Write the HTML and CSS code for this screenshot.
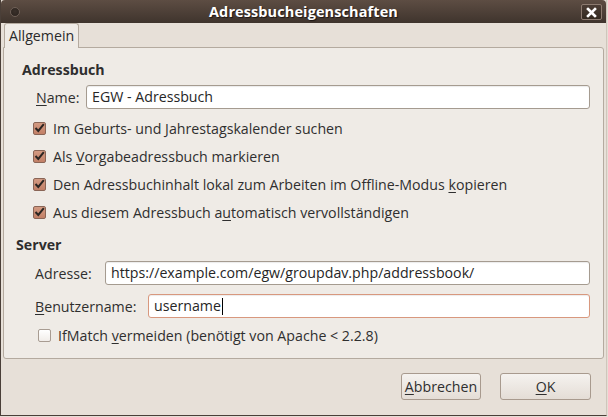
FILE: index.html
```html
<!DOCTYPE html>
<html>
<head>
<meta charset="utf-8">
<link rel="stylesheet" href="styles.css">
</head>
<body>
<div class="window">
  <div class="titlebar">
    <span class="wm-dot"></span>
    <span class="title">Adressbucheigenschaften</span>
    <span class="close-btn">
      <svg width="11" height="11" viewBox="0 0 11 11"><path d="M2 2 L9 9 M9 2 L2 9" stroke="#fff" stroke-width="2.6" stroke-linecap="square"/></svg>
    </span>
  </div>
  <div class="tabs">
    <div class="tab">Allgemein</div>
  </div>
  <div class="panel">
    <div class="heading h-addr">Adressbuch</div>
    <div class="row name-row">
      <span class="label"><u>N</u>ame:</span>
      <div class="input">EGW - Adressbuch</div>
    </div>
    <div class="checks">
      <div class="check"><span class="box on"><svg width="11" height="10" viewBox="0 0 11 10"><path d="M1.5 5 L4.3 8 L9.8 1.2" fill="none" stroke="#2b2522" stroke-width="2"/></svg></span><span>Im Geburts- und Jahrestagskalender suchen</span></div>
      <div class="check"><span class="box on"><svg width="11" height="10" viewBox="0 0 11 10"><path d="M1.5 5 L4.3 8 L9.8 1.2" fill="none" stroke="#2b2522" stroke-width="2"/></svg></span><span>Als <u>V</u>orgabeadressbuch markieren</span></div>
      <div class="check"><span class="box on"><svg width="11" height="10" viewBox="0 0 11 10"><path d="M1.5 5 L4.3 8 L9.8 1.2" fill="none" stroke="#2b2522" stroke-width="2"/></svg></span><span>Den Adressbuchinhalt lokal zum Arbeiten im Offline-Modus <u>k</u>opieren</span></div>
      <div class="check"><span class="box on"><svg width="11" height="10" viewBox="0 0 11 10"><path d="M1.5 5 L4.3 8 L9.8 1.2" fill="none" stroke="#2b2522" stroke-width="2"/></svg></span><span>Aus diesem Adressbuch a<u>u</u>tomatisch vervollständigen</span></div>
    </div>
    <div class="heading h-server">Server</div>
    <div class="row addr-row">
      <span class="label">Adresse:</span>
      <div class="input">https://example.com/egw/groupdav.php/addressbook/</div>
    </div>
    <div class="row user-row">
      <span class="label"><u>B</u>enutzername:</span>
      <div class="input focus">username<span class="caret"></span></div>
    </div>
    <div class="check ifmatch"><span class="box"></span><span>IfMatch <u>v</u>ermeiden (benötigt von Apache &lt; 2.2.8)</span></div>
  </div>
  <div class="buttons">
    <div class="btn btn-cancel"><u>A</u>bbrechen</div>
    <div class="btn btn-ok"><u>O</u>K</div>
  </div>
</div>
</body>
</html>
```

FILE: styles.css
```css
html, body {
  margin: 0;
  padding: 0;
  width: 608px;
  height: 417px;
  overflow: hidden;
  background: #e5ded5;
}
body {
  font-family: "Open Sans", "Noto Sans", sans-serif;
  font-size: 14.2px;
  color: #2f2f2f;
}
u { text-decoration: underline; text-underline-offset: 2px; }
.window {
  width: 607px;
  height: 416px;
  box-sizing: border-box;
  border-left: 1px solid #4a3f38;
  border-bottom: 1px solid #4a3f38;
  border-right: 1px solid #cfc6bb;
  background: #e7e0d8;
  display: flex;
  flex-direction: column;
}
.titlebar {
  height: 23px;
  flex: none;
  background: linear-gradient(#5d4d43, #3f342d);
  display: flex;
  align-items: center;
  position: relative;
  border-radius: 4px 4px 0 0;
}
.wm-dot {
  position: absolute;
  left: 9px;
  top: 7px;
  width: 8px;
  height: 8px;
  border-radius: 50%;
  background: radial-gradient(circle at 50% 40%, #3a302a, #2a221d);
  border: 1px solid #6f6057;
}
.title {
  flex: 1;
  text-align: center;
  color: #fff;
  font-weight: bold;
  font-size: 14.5px;
  text-shadow: 1px 1px 1px #1d1613;
  letter-spacing: 0.1px;
}
.close-btn {
  position: absolute;
  right: 4px;
  top: 4px;
  width: 19px;
  height: 14px;
  border: 1px solid #8c7b70;
  border-radius: 2px;
  background: linear-gradient(#4b3d35, #33291f);
  display: flex;
  align-items: center;
  justify-content: center;
}
.tabs {
  height: 25px;
  flex: none;
  padding-left: 3px;
  display: flex;
  align-items: flex-end;
  position: relative;
  z-index: 1;
}
.tab {
  width: 75px;
  height: 25px;
  box-sizing: border-box;
  border: 1px solid #b4aa9f;
  border-bottom: none;
  border-radius: 3px 3px 0 0;
  background: #efebe6;
  padding-left: 4px;
  line-height: 24px;
  color: #2a2a2a;
}
.panel {
  margin: -1px 2px 0 2px;
  height: 312px;
  box-sizing: border-box;
  border: 1px solid #b4aa9f;
  border-radius: 0 3px 3px 3px;
  background: #efebe6;
  display: flex;
  flex-direction: column;
  padding: 10px 13px 0 0;
}
.heading {
  height: 24px;
  line-height: 24px;
  font-weight: bold;
  color: #2e2e2e;
}
.h-addr { padding-left: 18px; }
.h-server { padding-left: 12px; margin-top: 7px; }
.row {
  display: flex;
  align-items: center;
  height: 24px;
}
.label { flex: none; }
.input {
  flex: 1;
  height: 24px;
  box-sizing: border-box;
  border: 1px solid #a59b90;
  border-radius: 3px;
  background: #fff;
  box-shadow: inset 0 1px 1px rgba(0,0,0,0.08);
  padding-left: 5px;
  line-height: 22px;
  color: #262626;
  white-space: nowrap;
  display: flex;
  align-items: center;
}
.input.focus { border-color: #d8987e; }
.caret {
  display: inline-block;
  width: 1px;
  height: 17px;
  background: #000;
  margin-left: 1px;
}
.name-row { margin-top: 3px; padding-left: 32px; }
.name-row .label { width: 50px; }
.addr-row { margin-top: 4px; padding-left: 31px; }
.addr-row .label { width: 70px; }
.user-row { margin-top: 9px; padding-left: 31px; }
.user-row .label { width: 113px; }
.checks {
  margin-top: 5px;
  display: flex;
  flex-direction: column;
}
.check {
  height: 28px;
  display: flex;
  align-items: center;
  padding-left: 29px;
  white-space: nowrap;
}
.box {
  width: 13px;
  height: 13px;
  box-sizing: border-box;
  border: 1px solid #a89c92;
  border-radius: 2px;
  background: linear-gradient(#ffffff, #f1ede9);
  margin-right: 7px;
  flex: none;
  display: flex;
  align-items: center;
  justify-content: center;
}
.box.on {
  border-color: #8a6556;
  background: linear-gradient(#d39a82, #c28067);
}
.ifmatch {
  margin-top: 5px;
  height: 24px;
  padding-left: 34px;
}
.buttons {
  flex: 1;
  display: flex;
  justify-content: flex-end;
  align-items: flex-start;
  padding: 14px 15px 0 0;
  gap: 19px;
}
.btn {
  height: 27px;
  box-sizing: border-box;
  border: 1px solid #a89a8e;
  border-radius: 3px;
  background: linear-gradient(#f5f2ef, #e4ddd6);
  display: flex;
  align-items: center;
  justify-content: center;
  color: #2f2f2f;
}
.btn-cancel { width: 80px; }
.btn-ok { width: 91px; }
```
